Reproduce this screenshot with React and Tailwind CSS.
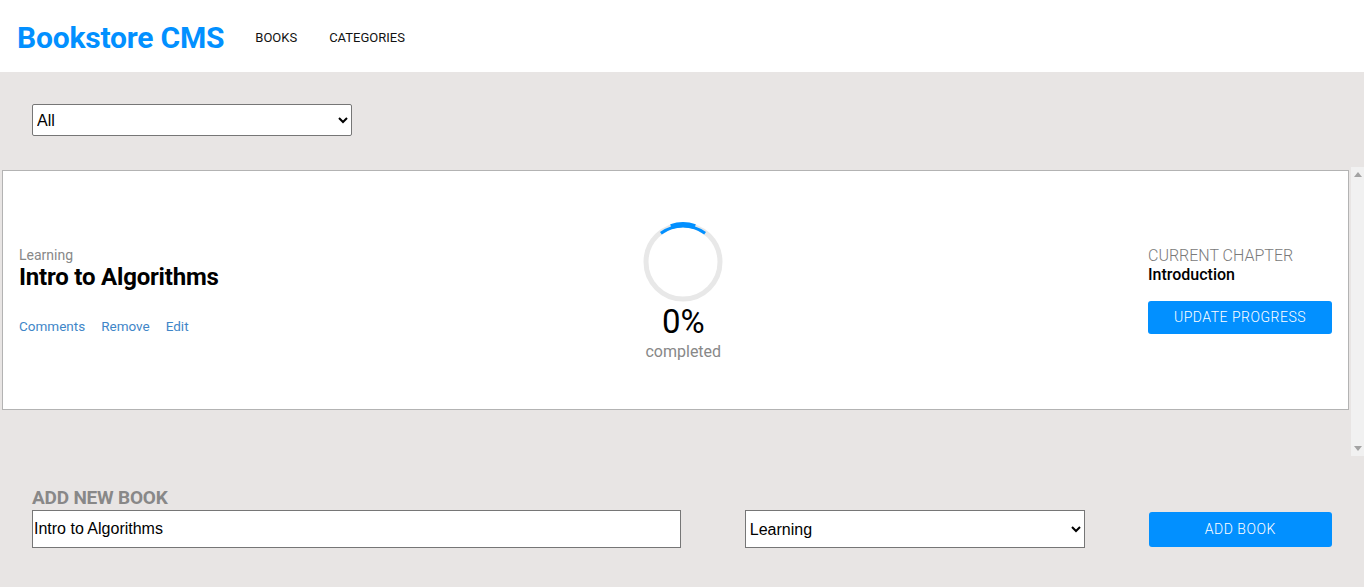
import React from 'react';

const books = [
  { id: 1, category: 'Learning', title: 'Intro to Algorithms', progress: 0, chapter: 'Introduction' },
];

const Header = () => (
  <header className="bg-white h-[72px] flex items-center px-[17px]">
    <h1 className="text-[30px] font-bold text-[#0290ff] tracking-[-0.2px] leading-none mr-[32px] mt-[4px]">
      Bookstore CMS
    </h1>
    <nav className="flex gap-[32px] text-[13px] text-[#121212] mt-[4px] -ml-[1px]">
      <a href="#books">BOOKS</a>
      <a href="#categories">CATEGORIES</a>
    </nav>
  </header>
);

const ProgressRing = () => (
  <svg width="84" height="84" viewBox="0 0 84 84">
    <circle cx="42" cy="43" r="37" fill="none" stroke="#e8e8e8" strokeWidth="5" />
    <path d="M 19.9 14.3 A 37 37 0 0 1 64.1 14.3" fill="none" stroke="#0290ff" strokeWidth="3" />
    <path d="M 30 7.5 A 37 37 0 0 1 54 7.5" fill="none" stroke="#0290ff" strokeWidth="5" />
  </svg>
);

const BookCard = ({ book }) => (
  <div className="bg-white border border-[#b3b3b3] h-[240px] flex items-center justify-between px-[16px]">
    <div className="flex flex-col">
      <span className="text-[14px] text-[#888] leading-[16px]">{book.category}</span>
      <span className="text-[24px] font-bold text-black leading-[28px] tracking-[-0.2px]">{book.title}</span>
      <div className="flex gap-[16px] mt-[27px] text-[13.5px] text-[#3f86c8] leading-[16px]">
        <button type="button">Comments</button>
        <button type="button">Remove</button>
        <button type="button">Edit</button>
      </div>
    </div>
    <div className="flex flex-col items-center">
      <ProgressRing />
      <span className="text-[33px] text-black leading-[36px] mt-[1px]">{book.progress}%</span>
      <span className="text-[16px] text-[#888] leading-[20px] mt-[2px]">completed</span>
    </div>
    <div className="flex flex-col w-[184px]">
      <span className="text-[16px] font-light text-[#7a7a7a] leading-[18px]">CURRENT CHAPTER</span>
      <span className="text-[16px] font-medium text-black leading-[20px]">{book.chapter}</span>
      <button
        type="button"
        className="mt-[16px] h-[33px] w-[184px] bg-[#0290ff] text-white text-[14px] font-light tracking-[0.5px] rounded-[3px]"
      >
        UPDATE PROGRESS
      </button>
    </div>
  </div>
);

const Scrollbar = () => (
  <div className="w-[13px] bg-[#f1f1f1] flex flex-col justify-between items-center py-[5px]">
    <svg width="8" height="5" viewBox="0 0 8 5">
      <path d="M0 5 L4 0 L8 5 Z" fill="#a3a3a3" />
    </svg>
    <svg width="8" height="5" viewBox="0 0 8 5">
      <path d="M0 0 L8 0 L4 5 Z" fill="#a3a3a3" />
    </svg>
  </div>
);

const AddBookForm = () => (
  <section className="px-[32px] pt-[32px]">
    <h2 className="text-[19px] font-bold text-[#888] leading-[20px] tracking-[-0.2px]">ADD NEW BOOK</h2>
    <form className="flex items-center mt-[2px]" onSubmit={(e) => e.preventDefault()}>
      <input
        type="text"
        defaultValue="Intro to Algorithms"
        className="w-[651px] h-[38px] bg-white border border-[#767676] px-[1px] text-[16px] text-black font-['Liberation_Sans',Arial,sans-serif]"
      />
      <select
        defaultValue="Learning"
        className="ml-[64px] w-[341px] h-[38px] bg-white border border-[#767676] text-[16px] text-black font-['Liberation_Sans',Arial,sans-serif]"
      >
        <option value="Learning">Learning</option>
        <option value="Action">Action</option>
        <option value="Science Fiction">Science Fiction</option>
      </select>
      <button
        type="submit"
        className="ml-[64px] w-[184px] h-[35px] bg-[#0290ff] text-white text-[14px] font-light tracking-[0.5px] rounded-[3px] mt-[1px]"
      >
        ADD BOOK
      </button>
    </form>
  </section>
);

export default function App() {
  return (
    <div className="min-h-[587px] bg-[#e8e5e4] font-['Roboto',sans-serif]">
      <Header />
      <div className="px-[32px] pt-[32px]">
        <select
          defaultValue="All"
          className="w-[320px] h-[32px] bg-white border border-[#767676] rounded-[2px] text-[16px] text-black font-['Liberation_Sans',Arial,sans-serif]"
        >
          <option value="All">All</option>
          <option value="Learning">Learning</option>
          <option value="Action">Action</option>
        </select>
      </div>
      <div className="mt-[31px] h-[289px] flex">
        <div className="flex-1 overflow-hidden pt-[3px] pl-[2px] pr-[2px]">
          {books.map((book) => (
            <BookCard key={book.id} book={book} />
          ))}
        </div>
        <Scrollbar />
      </div>
      <AddBookForm />
      <div className="h-[39px]" />
    </div>
  );
}
